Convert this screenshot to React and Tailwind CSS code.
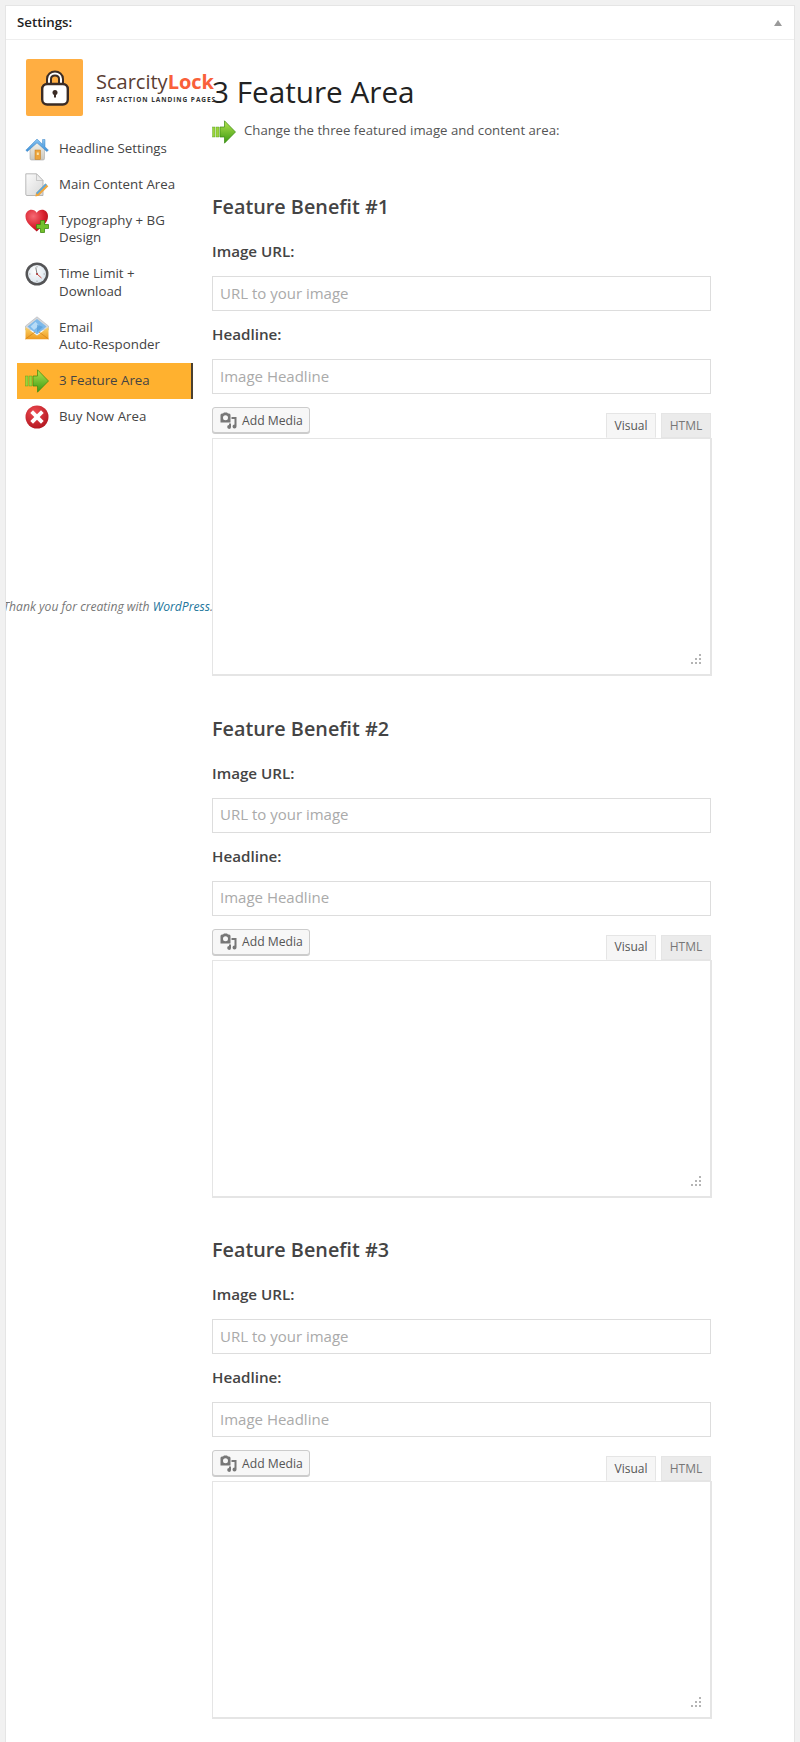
const navItems = [
  { id: "home", lines: ["Headline Settings"], Icon: HomeIcon },
  { id: "content", lines: ["Main Content Area"], Icon: DocIcon },
  { id: "type", lines: ["Typography + BG", "Design"], Icon: HeartIcon },
  { id: "time", lines: ["Time Limit +", "Download"], Icon: ClockIcon },
  { id: "email", lines: ["Email", "Auto-Responder"], Icon: MailIcon },
  { id: "feature", lines: ["3 Feature Area"], Icon: ArrowIcon, active: true },
  { id: "buy", lines: ["Buy Now Area"], Icon: CrossIcon },
];

function HomeIcon() {
  return (
    <svg width="24" height="24" viewBox="0 0 24 24">
      <defs>
        <linearGradient id="roof" x1="0" y1="0" x2="0" y2="1">
          <stop offset="0" stopColor="#8cc6f2" />
          <stop offset="1" stopColor="#3a8fd8" />
        </linearGradient>
        <linearGradient id="wall" x1="0" y1="0" x2="0" y2="1">
          <stop offset="0" stopColor="#f4f1e8" />
          <stop offset="1" stopColor="#c9c6bd" />
        </linearGradient>
      </defs>
      <path d="M5 11.5 L12 5.5 L19.5 11.5 V21.5 Q19.5 23 18 23 H6.5 Q5 23 5 21.5 Z" fill="url(#wall)" stroke="#a9a9a9" strokeWidth="0.6" />
      <path d="M0.8 13.2 L12 2 L17.5 7.3 V2.5 H20 V9.8 L23.4 13.2 L21.8 14.6 L12 5.8 L2.3 14.6 Z" fill="url(#roof)" stroke="#3d85c6" strokeWidth="0.5" />
      <rect x="10" y="13" width="5.5" height="9.5" fill="#eda33a" stroke="#c17b1c" strokeWidth="0.5" />
      <rect x="11.8" y="15.5" width="2" height="2.5" fill="#fbe3a8" />
    </svg>
  );
}

function DocIcon() {
  return (
    <svg width="24" height="24" viewBox="0 0 24 24">
      <defs>
        <linearGradient id="paper" x1="0" y1="0" x2="1" y2="1">
          <stop offset="0" stopColor="#fbfbfb" />
          <stop offset="1" stopColor="#d8d8d8" />
        </linearGradient>
      </defs>
      <path d="M0.8 0.8 H11.5 L18 7.5 V22.5 H2 Q0.8 22.5 0.8 21.3 Z" fill="url(#paper)" stroke="#a8a8a8" strokeWidth="0.8" />
      <path d="M11.5 0.8 V7.5 H18 Z" fill="#ececec" stroke="#b0b0b0" strokeWidth="0.6" />
      <path d="M11 20 L20.5 10.5 L23.3 13.2 L13.8 22.7 L10.4 23.4 Z" fill="#f0a63c" />
      <path d="M11 20 L20.5 10.5 L21.8 11.8 L12.4 21.3 Z" fill="#5aa7e0" />
    </svg>
  );
}

function HeartIcon() {
  return (
    <svg width="24" height="25" viewBox="0 0 24 25">
      <defs>
        <radialGradient id="heart" cx="0.35" cy="0.3" r="0.8">
          <stop offset="0" stopColor="#f66a74" />
          <stop offset="0.6" stopColor="#d81f2d" />
          <stop offset="1" stopColor="#a30f1a" />
        </radialGradient>
      </defs>
      <path d="M11.7 22.5 C6 17.5 0.5 13.5 0.5 7.3 C0.5 3.3 3.5 0.8 6.5 0.8 C8.8 0.8 10.7 2 11.7 3.8 C12.8 2 14.7 0.8 17 0.8 C20.2 0.8 23 3.3 23 7.3 C23 13.5 17.5 17.5 11.7 22.5 Z" fill="url(#heart)" />
      <path d="M15.5 11.5 H19.5 V15.5 H23.5 V19.5 H19.5 V23.5 H15.5 V19.5 H11.5 V15.5 H15.5 Z" fill="#72c02c" stroke="#3f8a12" strokeWidth="0.8" />
    </svg>
  );
}

function ClockIcon() {
  return (
    <svg width="24" height="24" viewBox="0 0 24 24">
      <defs>
        <radialGradient id="face" cx="0.4" cy="0.35" r="0.8">
          <stop offset="0" stopColor="#ffffff" />
          <stop offset="1" stopColor="#d3dfe9" />
        </radialGradient>
      </defs>
      <circle cx="12" cy="12" r="11.5" fill="#545456" />
      <circle cx="12" cy="12" r="9" fill="url(#face)" />
      <path d="M12 12 L10.8 5.5" stroke="#777" strokeWidth="0.9" />
      <path d="M12 12 L16.5 16" stroke="#c0392b" strokeWidth="0.9" />
      <circle cx="12" cy="12" r="1" fill="#a33" />
      <g fill="#999">
        <rect x="11.6" y="4" width="0.8" height="1.5" />
        <rect x="11.6" y="18.5" width="0.8" height="1.5" />
        <rect x="4" y="11.6" width="1.5" height="0.8" />
        <rect x="18.5" y="11.6" width="1.5" height="0.8" />
      </g>
    </svg>
  );
}

function MailIcon() {
  return (
    <svg width="24" height="24" viewBox="0 0 24 24">
      <defs>
        <linearGradient id="env" x1="0" y1="0" x2="0" y2="1">
          <stop offset="0" stopColor="#fbd46a" />
          <stop offset="1" stopColor="#ee9a1e" />
        </linearGradient>
      </defs>
      <path d="M0.5 10 L12 0.8 L23.5 10 V14 H0.5 Z" fill="#d5d7da" stroke="#a7abb0" strokeWidth="0.5" />
      <path d="M2.5 10.5 L12 3 L21.5 10.5 L12 18.5 Z" fill="#7db9ea" />
      <path d="M5.5 10.5 L10.5 5.8 L14 9.5 L9 14 Z" fill="#b7dbf6" />
      <path d="M12 8.5 L18 11 L12 16.5 Z" fill="#4f97d6" opacity="0.6" />
      <path d="M0.5 11 L12 19.5 L23.5 11 V23.3 H0.5 Z" fill="url(#env)" />
      <path d="M0.5 23 L10 16 M23.5 23 L14 16" stroke="#d5851a" strokeWidth="0.8" />
    </svg>
  );
}

function ArrowIcon() {
  return (
    <svg width="24" height="24" viewBox="0 0 24 24">
      <defs>
        <linearGradient id="arrow" x1="0" y1="0" x2="0" y2="1">
          <stop offset="0" stopColor="#b4e34f" />
          <stop offset="1" stopColor="#3a9a13" />
        </linearGradient>
      </defs>
      <rect x="0.5" y="7" width="2.5" height="10" fill="#9bd43b" stroke="#4f9e1a" strokeWidth="0.4" />
      <rect x="4" y="7" width="3" height="10" fill="#9bd43b" stroke="#4f9e1a" strokeWidth="0.4" />
      <path d="M8 7 H12.5 V0.8 L23.5 12 L12.5 23.2 V17 H8 Z" fill="url(#arrow)" stroke="#39890f" strokeWidth="0.7" />
    </svg>
  );
}

function CrossIcon() {
  return (
    <svg width="24" height="24" viewBox="0 0 24 24">
      <defs>
        <radialGradient id="redball" cx="0.4" cy="0.3" r="0.85">
          <stop offset="0" stopColor="#ee4a50" />
          <stop offset="1" stopColor="#a90f19" />
        </radialGradient>
      </defs>
      <circle cx="12" cy="12" r="11.5" fill="url(#redball)" />
      <path d="M8 5.3 L12 9.3 L16 5.3 L18.7 8 L14.7 12 L18.7 16 L16 18.7 L12 14.7 L8 18.7 L5.3 16 L9.3 12 L5.3 8 Z" fill="#ffffff" />
    </svg>
  );
}

function LockLogo() {
  return (
    <svg width="28" height="36" viewBox="0 0 28 36" fill="none">
      <path d="M8 15 V9 C8 5.5 10.8 3.5 14 3.5 C17.2 3.5 20 5.5 20 9 V15" stroke="#3b2c25" strokeWidth="6" />
      <path d="M8 15 V9 C8 5.5 10.8 3.5 14 3.5 C17.2 3.5 20 5.5 20 9 V15" stroke="#ffffff" strokeWidth="2" />
      <rect x="1.2" y="14" width="25.6" height="20.5" rx="5" fill="#ffffff" stroke="#3b2c25" strokeWidth="2.4" />
      <circle cx="14" cy="22.5" r="2.5" fill="#3b2c25" />
      <rect x="13" y="23" width="2" height="4.5" fill="#3b2c25" />
    </svg>
  );
}

function MediaIcon() {
  return (
    <svg width="17" height="17" viewBox="0 0 17 17" fill="#777">
      <path d="M0.5 3 Q0.5 1.5 2 1.5 H3 L4 0.5 H7 L8 1.5 H9 Q10.5 1.5 10.5 3 V10.5 H0.5 Z M5.5 3.2 A2.5 2.5 0 1 0 5.5 8.2 A2.5 2.5 0 1 0 5.5 3.2 Z" fillRule="evenodd" />
      <path d="M11.5 5 H16.5 V14.5 A2 2 0 1 1 14.5 12.5 V7 H11.5 Z" />
      <path d="M11 11.5 V15 A1.9 1.9 0 1 1 9 13.1 V11.5 Z" />
    </svg>
  );
}

function ResizeDots() {
  return (
    <svg width="12" height="12" viewBox="0 0 12 12" fill="#b4b4b4">
      <rect x="9" y="0" width="2" height="2" />
      <rect x="5" y="4" width="2" height="2" />
      <rect x="9" y="4" width="2" height="2" />
      <rect x="1" y="8" width="2" height="2" />
      <rect x="5" y="8" width="2" height="2" />
      <rect x="9" y="8" width="2" height="2" />
    </svg>
  );
}

function Benefit({ num }) {
  return (
    <section className="h-[521.5px]">
      <h3 className="text-[19.8px] leading-[26px] font-semibold text-[#444]">Feature Benefit #{num}</h3>
      <label className="block mt-[21px] text-[15.2px] leading-[20px] font-semibold text-[#444]">Image URL:</label>
      <input
        placeholder="URL to your image"
        className="block mt-[15px] w-[499px] h-[35px] pl-[7px] pb-[2px] border border-[#ddd] bg-white text-[15px] outline-none placeholder:text-[#aaa]"
      />
      <label className="block mt-[13px] text-[15.2px] leading-[20px] font-semibold text-[#444]">Headline:</label>
      <input
        placeholder="Image Headline"
        className="block mt-[15px] w-[499px] h-[35px] pl-[7px] pb-[2px] border border-[#ddd] bg-white text-[15px] outline-none placeholder:text-[#aaa]"
      />
      <div className="mt-[13px] w-[499px] flex items-end justify-between">
        <button className="mb-[5px] flex items-center gap-[5px] w-[98px] h-[26px] pl-[7px] bg-[#f7f7f7] border border-[#ccc] rounded-[3px] shadow-[0_1px_0_#ccc] text-[12.2px] text-[#555]">
          <MediaIcon />
          <span className="pt-[2px]">Add Media</span>
        </button>
        <div className="flex gap-[5px] text-[12px] text-[#555]">
          <span className="w-[50px] h-[25px] -mb-px z-10 flex items-center justify-center bg-[#f6f6f6] border border-[#e5e5e5] border-b-[#f6f6f6]">Visual</span>
          <span className="w-[50px] h-[25px] flex items-center justify-center bg-[#ebebeb] border border-[#e5e5e5] text-[#777]">HTML</span>
        </div>
      </div>
      <div className="w-[500px] h-[238px] p-[8px] flex items-end justify-end bg-white border border-[#e5e5e5] border-b-2 border-r-2">
        <ResizeDots />
      </div>
    </section>
  );
}

export default function App() {
  return (
    <div className="min-h-[1742px] bg-[#f1f1f1] pt-[5px] px-[5px] font-['Open_Sans',sans-serif]">
      <div className="h-[1737px] bg-white border border-[#e5e5e5] border-b-0 overflow-hidden">
        <div className="h-[34px] pl-[11px] pr-[12px] flex items-center justify-between border-b border-[#eee]">
          <span className="text-[13.3px] font-semibold text-[#222]">Settings:</span>
          <span className="w-0 h-0 border-x-[4px] border-x-transparent border-b-[6px] border-b-[#9a9a9a]" />
        </div>
        <div className="flex pl-[11px]">
          <aside className="w-[176px] shrink-0 relative z-10">
            <div className="mt-[19px] ml-[9px] flex items-center">
              <div className="w-[57px] h-[57px] shrink-0 rounded-[2px] bg-[#ffae42] flex items-center justify-center">
                <LockLogo />
              </div>
              <div className="ml-[13px] -mt-[3px] whitespace-nowrap">
                <div className="text-[20px] leading-[26px] text-[#5a3d33]">
                  Scarcity<span className="font-bold text-[#f9603a]">Lock</span>
                </div>
                <div className="text-[6.5px] leading-[9px] font-bold tracking-[0.95px] text-[#333]">FAST ACTION LANDING PAGES</div>
              </div>
            </div>
            <nav className="mt-[14.5px]">
              {navItems.map(({ id, lines, Icon, active }) => (
                <div
                  key={id}
                  className={`flex pl-[8px] py-[9.25px] text-[13.3px] leading-[17.5px] text-[#444] ${active ? "bg-[#ffb12f] border-r-2 border-[#4a4030]" : ""}`}
                >
                  <span className="w-[24px] h-[17.5px] shrink-0 flex items-start -mt-[3px]">
                    <Icon />
                  </span>
                  <span className="ml-[10px]">
                    {lines.map((l) => (
                      <span key={l} className="block">{l}</span>
                    ))}
                  </span>
                </div>
              ))}
            </nav>
            <p className="mt-[162px] -ml-[14px] whitespace-nowrap text-[12.15px] leading-[20px] italic text-[#777]">
              Thank you for creating with <a className="text-[#21759b]">WordPress</a>.
            </p>
          </aside>
          <main className="ml-[19px] flex-1">
            <h1 className="mt-[34px] text-[29.7px] leading-[36px] text-[#222]">3 Feature Area</h1>
            <div className="mt-[10px] flex items-center h-[24px]">
              <ArrowIcon />
              <span className="ml-[8px] pb-[2px] text-[13.2px] text-[#555]">Change the three featured image and content area:</span>
            </div>
            <div className="mt-[50px]">
              <Benefit num={1} />
              <Benefit num={2} />
              <Benefit num={3} />
            </div>
          </main>
        </div>
      </div>
    </div>
  );
}
